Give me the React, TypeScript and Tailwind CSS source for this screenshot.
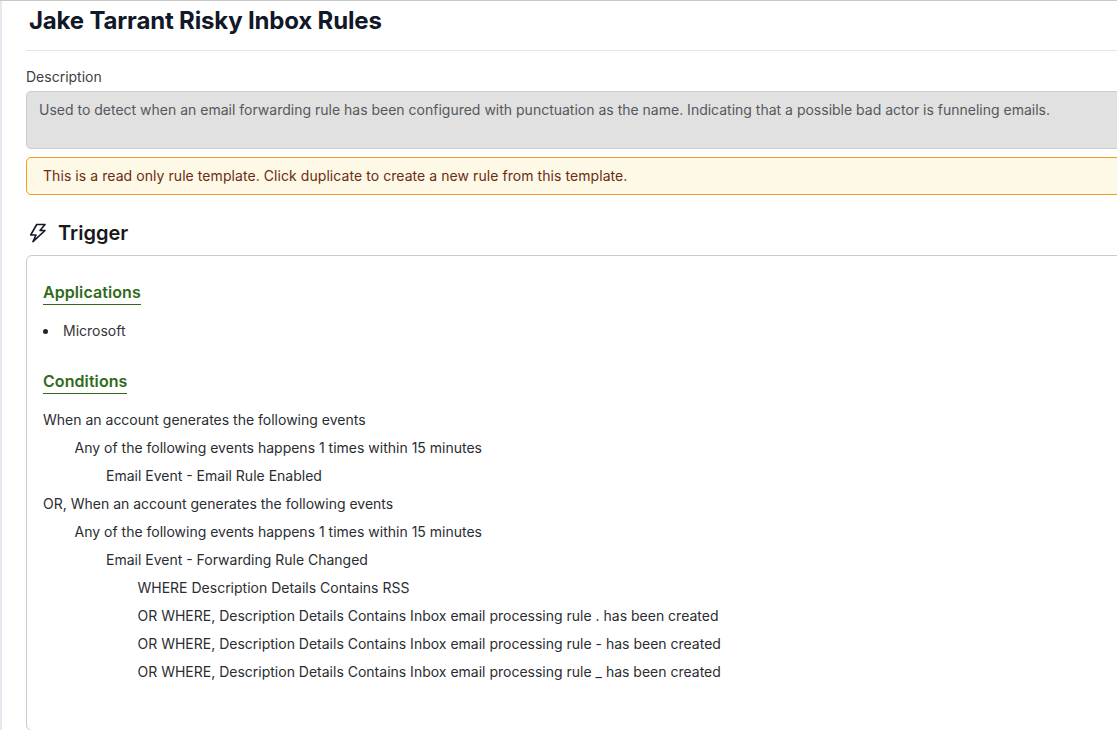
import React from "react";

const conditions = [
  { text: "When an account generates the following events", indent: "pl-0" },
  { text: "Any of the following events happens 1 times within 15 minutes", indent: "pl-[31.5px]" },
  { text: "Email Event - Email Rule Enabled", indent: "pl-[63px]" },
  { text: "OR, When an account generates the following events", indent: "pl-0" },
  { text: "Any of the following events happens 1 times within 15 minutes", indent: "pl-[31.5px]" },
  { text: "Email Event - Forwarding Rule Changed", indent: "pl-[63px]" },
  { text: "WHERE Description Details Contains RSS", indent: "pl-[94.5px]" },
  { text: "OR WHERE, Description Details Contains Inbox email processing rule . has been created", indent: "pl-[94.5px]" },
  { text: "OR WHERE, Description Details Contains Inbox email processing rule - has been created", indent: "pl-[94.5px]" },
  { text: "OR WHERE, Description Details Contains Inbox email processing rule _ has been created", indent: "pl-[94.5px]" },
];

const SectionTitle = ({ children }: { children: React.ReactNode }) => (
  <h3 className="inline-block border-b border-[#2f6b1a] pb-[1px] text-[16px] font-semibold leading-[21px] tracking-[0.08px] text-[#2f6b1a]">
    {children}
  </h3>
);

const App: React.FC = () => {
  return (
    <div className="flex h-[730px] w-[1117px] overflow-hidden border-t border-[#c8c8c8] bg-white font-['Inter',sans-serif] text-[#1f2328]">
      <div className="w-[2px] shrink-0 bg-[#e8e8f0]" />
      <div className="w-[1160px] shrink-0 pl-[24px]">
        <div className="h-[50px] border-b border-[#e4e4ea] pl-[3px] pt-[5px]">
          <h1 className="text-[24px] font-bold leading-[30px] tracking-[-0.17px] text-[#111827]">Jake Tarrant Risky Inbox Rules</h1>
        </div>

        <div className="mt-[17px] text-[14px] leading-[17px] text-[#3a3f45]">Description</div>
        <div className="mt-[6px] h-[58px] rounded-[5px] border border-[#cccccc] bg-[#e1e1e1] px-[12px] pt-[8px] text-[14px] leading-[20px] text-[#55585c]">
          Used to detect when an email forwarding rule has been configured with punctuation as the name. Indicating that a possible bad actor is funneling emails.
        </div>

        <div className="mt-[8px] h-[38px] rounded-[5px] border border-[#f59a23] bg-[#fef8e7] px-[16px] text-[14px] leading-[36px] tracking-[0.065px] text-[#6b2c10]">
          This is a read only rule template. Click duplicate to create a new rule from this template.
        </div>

        <div className="mt-[24px] flex h-[28px] items-center">
          <svg width="20" height="22" viewBox="0 0 20 22" fill="none" stroke="#111827" strokeWidth="1.6" strokeLinejoin="round" strokeLinecap="round" className="ml-[2px]">
            <path d="M8.7 2.5H17L12 8.5h5L5 19.7 8 13H2.7z" />
          </svg>
          <h2 className="ml-[10px] text-[20px] font-semibold leading-[28px] text-[#18181b]">Trigger</h2>
        </div>

        <div className="mt-[8px] h-[476px] rounded-[6px] border border-[#cbcbcf] px-[16px] pt-[24px]">
          <SectionTitle>Applications</SectionTitle>
          <ul className="mt-[14px] text-[14px] leading-[24px] text-[#33363a]">
            <li className="flex items-center">
              <span className="mr-[15px] h-[5px] w-[5px] rounded-full bg-[#1f2328]" />
              Microsoft
            </li>
          </ul>

          <div className="mt-[26px]">
            <SectionTitle>Conditions</SectionTitle>
          </div>
          <div className="mt-[12px] text-[14px] leading-[28px] text-[#2a2d31]">
            {conditions.map((line, i) => (
              <div key={i} className={line.indent}>
                {line.text}
              </div>
            ))}
          </div>
        </div>
      </div>
    </div>
  );
};

export default App;
